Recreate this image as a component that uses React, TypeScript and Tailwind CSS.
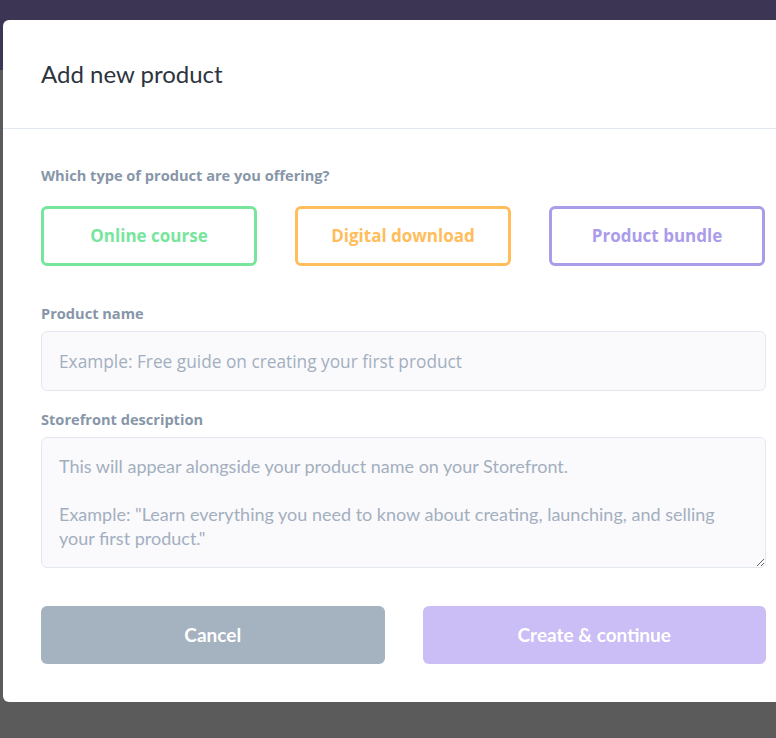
import { useState } from 'react';

const productTypes = [
  { label: 'Online course', className: 'border-[#77e69c] text-[#77e69c]' },
  { label: 'Digital download', className: 'border-[#ffbd5c] text-[#ffbd5c]' },
  { label: 'Product bundle', className: 'border-[#ab9cea] text-[#ab9cea]' },
];

const navItems = ['Dashboard', 'Editor', 'Products', 'Marketplace', 'Emails'];

export default function App() {
  const [name, setName] = useState('');
  const [description, setDescription] = useState('');

  return (
    <div className="relative w-[776px] h-[738px] overflow-hidden bg-[#5b5b5b] font-['Lato','Noto_Sans',sans-serif]">
      {/* Page behind the overlay */}
      <div className="h-[70px] bg-[#3d3554] flex items-start pl-[280px] pt-[16px] gap-[44px] text-[16px] text-[#5c5570]">
        {navItems.map(item => (
          <span key={item}>{item}</span>
        ))}
      </div>

      {/* Modal */}
      <div className="absolute left-[3px] top-[20px] w-[801px] bg-white rounded-[6px]">
        <div className="h-[109px] flex items-center px-[38px] border-b border-[#e2e8f0]">
          <h2 className="text-[24px] leading-[32px] text-[#2d3440]">Add new product</h2>
        </div>

        <div className="px-[38px] pt-[36px] pb-[38px]">
          <p className="font-['Open_Sans',sans-serif] text-[14.6px] leading-[20px] font-bold text-[#8796a8]">
            Which type of product are you offering?
          </p>
          <div className="mt-[21px] flex gap-[38px]">
            {productTypes.map(t => (
              <button
                key={t.label}
                className={`h-[60px] w-[216px] rounded-[6px] border-[3px] bg-white font-['Open_Sans',sans-serif] text-[17px] font-bold ${t.className}`}
              >
                {t.label}
              </button>
            ))}
          </div>

          <label className="block mt-[37px] font-['Open_Sans',sans-serif] text-[14.6px] leading-[20px] font-bold text-[#8796a8]">
            Product name
          </label>
          <input
            type="text"
            value={name}
            onChange={e => setName(e.target.value)}
            placeholder="Example: Free guide on creating your first product"
            className="mt-[8px] block w-full h-[60px] px-[17px] rounded-[6px] border border-[#e3e7ef] bg-[#fafafc] font-['Open_Sans',sans-serif] text-[17.3px] text-[#4a5568] placeholder:text-[#a3afbf] outline-none"
          />

          <label className="block mt-[18px] font-['Open_Sans',sans-serif] text-[14.6px] leading-[20px] font-bold text-[#8796a8]">
            Storefront description
          </label>
          <textarea
            value={description}
            onChange={e => setDescription(e.target.value)}
            placeholder={
              'This will appear alongside your product name on your Storefront.\n\nExample: "Learn everything you need to know about creating, launching, and selling your first product."'
            }
            className="mt-[8px] block w-full h-[131px] px-[17px] pt-[16px] rounded-[6px] border border-[#e3e7ef] bg-[#fafafc] text-[18px] leading-[24px] text-[#4a5568] placeholder:text-[#a3afbf] outline-none"
          />

          <div className="mt-[38px] grid grid-cols-2 gap-[38px]">
            <button className="h-[58px] rounded-[6px] bg-[#a5b2bf] text-white text-[19px] font-bold">
              Cancel
            </button>
            <button className="h-[58px] rounded-[6px] bg-[#cbbdf5] text-white text-[19px] font-bold">
              Create &amp; continue
            </button>
          </div>
        </div>
      </div>
    </div>
  );
}
